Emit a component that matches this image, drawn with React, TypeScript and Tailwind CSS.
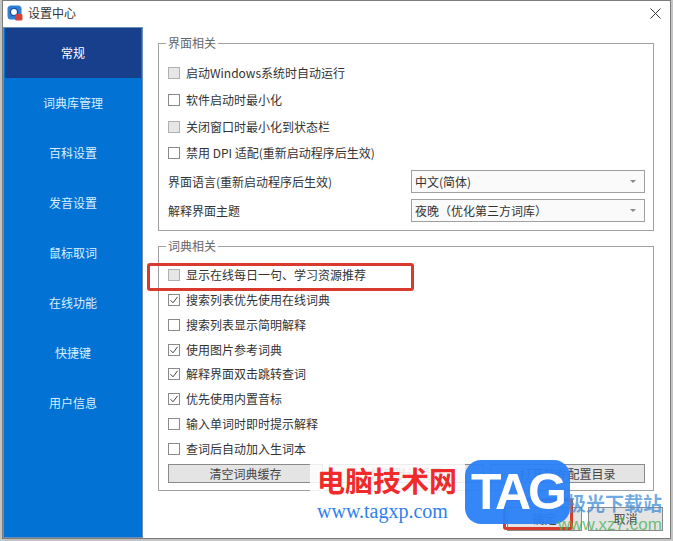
const FONT = '"Noto Sans CJK SC", "Liberation Sans", sans-serif';

const NAV = ["常规", "词典库管理", "百科设置", "发音设置", "鼠标取词", "在线功能", "快捷键", "用户信息"];

function Check({ label, checked, disabled, rowClass = "h-[25px]" }: { label: string; checked?: boolean; disabled?: boolean; rowClass?: string }) {
  return (
    <div className={`flex items-center gap-[6px] ${rowClass}`}>
      <span className={`w-[12px] h-[12px] border flex items-center justify-center shrink-0 ${disabled ? "bg-[#e6e6e6] border-[#b0b0b0]" : "bg-white border-[#8a8a8a]"}`}>
        {checked && (
          <svg width="10" height="10" viewBox="0 0 10 10">
            <path d="M1.5 5.2 L4 7.8 L8.6 1.8" fill="none" stroke="#444" strokeWidth="1" />
          </svg>
        )}
      </span>
      <span className="text-[12px] leading-none text-[#333] whitespace-nowrap">{label}</span>
    </div>
  );
}

function Group({ title, className, children }: { title: string; className: string; children: React.ReactNode }) {
  return (
    <div className={`relative border border-[#a0a0a0] ${className}`}>
      <span className="absolute left-[7px] top-[-9px] bg-white px-[2px] text-[12px] leading-[16px] text-[#666]">{title}</span>
      {children}
    </div>
  );
}

function Combo({ label }: { label: string }) {
  return (
    <div className="w-[234px] h-[23px] border border-[#a0a0a0] bg-[#fafafa] flex items-center justify-between pl-[3px] pr-[8px]">
      <span className="text-[12px] leading-none text-[#333]">{label}</span>
      <span className="w-0 h-0 border-l-[3px] border-r-[3px] border-t-[3px] border-l-transparent border-r-transparent border-t-[#888]" />
    </div>
  );
}

function Btn({ label, className }: { label: string; className: string }) {
  return (
    <div className={`border border-[#8a8a8a] bg-[#e4e4e4] flex items-center justify-center text-[12px] leading-none text-[#444] ${className}`}>
      {label}
    </div>
  );
}

export default function App() {
  return (
    <div className="relative w-[673px] h-[541px] overflow-hidden bg-[#c4c4c4] pl-[2px]" style={{ fontFamily: FONT }}>
      <div className="w-[669px] h-[539px] bg-white border border-[#7c7c7c] flex flex-col">
        <div className="h-[26px] flex items-center shrink-0 pl-[4px] pr-[9px] pb-[2px] justify-between">
          <div className="flex items-center gap-[5px]">
            <svg width="16" height="16" viewBox="0 0 16 16">
              <rect x="0.5" y="0.5" width="14" height="14" rx="3.5" fill="#2f7fd6" />
              <circle cx="7" cy="7" r="3.6" fill="#fff" stroke="#1b4f9c" strokeWidth="1.4" />
              <rect x="8" y="9" width="7.5" height="6.5" rx="1.5" fill="#d8403a" />
            </svg>
            <span className="text-[12px] leading-none text-[#333]">设置中心</span>
          </div>
          <svg width="11" height="11" viewBox="0 0 11 11">
            <path d="M0.5 0.5 L10.5 10.5 M10.5 0.5 L0.5 10.5" stroke="#333" strokeWidth="1" />
          </svg>
        </div>
        <div className="flex flex-1 min-h-0">
          <div className="w-[140px] border border-[#6b8fb5] bg-[#0272d4] px-[1px] flex flex-col shrink-0">
            {NAV.map((n, i) => (
              <div
                key={n}
                className={`h-[50px] flex items-center justify-center text-[12px] leading-none ${i === 0 ? "bg-[#183f8c] text-white" : "text-[#d8f0ff]"}`}
              >
                {n}
              </div>
            ))}
          </div>
          <div className="flex-1 flex flex-col pl-[15px] pt-[16px]">
            <Group title="界面相关" className="w-[496px] h-[188px] pt-[16px] pl-[9px] pr-[8px]">
              <Check label="启动Windows系统时自动运行" disabled />
              <div className="mt-[2px]"><Check label="软件启动时最小化" /></div>
              <div className="mt-[2px]"><Check label="关闭窗口时最小化到状态栏" disabled /></div>
              <div className="mt-[1px]"><Check label="禁用 DPI 适配(重新启动程序后生效)" /></div>
              <div className="flex justify-between items-start mt-[5px]">
                <span className="text-[12px] leading-[23px] text-[#333]">界面语言(重新启动程序后生效)</span>
                <Combo label="中文(简体)" />
              </div>
              <div className="flex justify-between items-start mt-[6px]">
                <span className="text-[12px] leading-[23px] text-[#333]">解释界面主题</span>
                <Combo label="夜晚（优化第三方词库）" />
              </div>
            </Group>
            <Group title="词典相关" className="w-[496px] h-[245px] mt-[15px] pt-[15px] pl-[9px] pr-[8px]">
              <Check rowClass="h-[25px]" label="显示在线每日一句、学习资源推荐" disabled />
              <Check rowClass="h-[25px]" label="搜索列表优先使用在线词典" checked />
              <Check rowClass="h-[25px]" label="搜索列表显示简明解释" />
              <Check rowClass="h-[25px]" label="使用图片参考词典" checked />
              <Check rowClass="h-[24.5px]" label="解释界面双击跳转查词" checked />
              <Check rowClass="h-[24.5px]" label="优先使用内置音标" checked />
              <Check rowClass="h-[25px]" label="输入单词时即时提示解释" />
              <Check rowClass="h-[25px]" label="查词后自动加入生词本" />
              <div className="flex gap-[6px] mt-[3px]">
                <Btn label="清空词典缓存" className="w-[155px] h-[19px]" />
                <Btn label="恢复默认设置" className="w-[155px] h-[19px]" />
                <Btn label="打开软件配置目录" className="w-[155px] h-[19px]" />
              </div>
            </Group>
            <div className="flex justify-end gap-[6px] mt-[16px] mr-[7px]">
              <Btn label="确定" className="w-[75px] h-[24px]" />
              <Btn label="取消" className="w-[75px] h-[24px]" />
            </div>
          </div>
        </div>
      </div>

      {/* red annotation */}
      <div className="absolute left-[147px] top-[263px] w-[267px] h-[28px] border-[3px] border-[#d83a2e] rounded-[3px]" />
      <div className="absolute left-[503px] top-[498px] w-[70px] h-[32px] border-[3px] border-[#d83a2e] rounded-[3px]" />

      {/* watermark */}
      <div className="absolute left-[310px] top-[464px] w-[155px] h-[60px] bg-white/85" />
      <div className="absolute left-[317px] top-[462px] text-[28px] leading-[36px] font-bold text-[#f02a2a] whitespace-nowrap" style={{ fontFamily: '"Noto Sans CJK SC", sans-serif' }}>电脑技术网</div>
      <div className="absolute left-[317px] top-[499px] text-[20px] leading-[24px] text-[#2f7fee] whitespace-nowrap" style={{ fontFamily: '"Liberation Serif", serif' }}>www.tagxp.com</div>
      <div className="absolute left-[465px] top-[460px] w-[105px] h-[64px] rounded-[16px] bg-[#2a80f5]/95 flex items-center justify-center text-white text-[50px] leading-none font-bold tracking-[-3px]" style={{ fontFamily: '"Liberation Sans", sans-serif' }}>TAG</div>
      <div className="absolute left-[567px] top-[491px] text-[19px] leading-[24px] font-bold text-[#3f8fd6]/75 whitespace-nowrap">极光下载站</div>
      <div className="absolute left-[558px] top-[516px] text-[17px] leading-[18px] text-[#4fb356]/80 whitespace-nowrap" style={{ fontFamily: '"Liberation Sans", sans-serif' }}>www.xz7.com</div>
    </div>
  );
}
